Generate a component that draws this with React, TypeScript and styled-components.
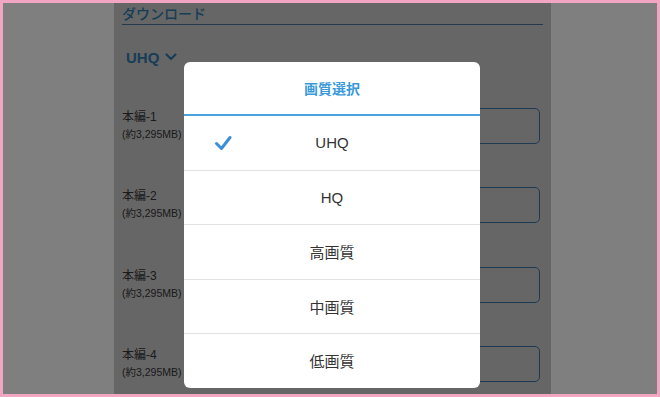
import React from "react";
import styled, { createGlobalStyle } from "styled-components";

const GlobalStyle = createGlobalStyle`
  html, body {
    margin: 0;
    padding: 0;
    background: #f3a6c1;
  }
  body {
    font-family: "Liberation Sans", "Noto Sans CJK JP", sans-serif;
  }
  * {
    box-sizing: border-box;
  }
`;

const qualities = ["UHQ", "HQ", "高画質", "中画質", "低画質"];
const episodes = ["本編-1", "本編-2", "本編-3", "本編-4"];

const CheckIcon = () => (
  <svg width="18" height="16" viewBox="0 0 18 16">
    <polyline
      points="2.5,8.5 7.5,13.5 16,2.5"
      fill="none"
      stroke="#3a8fd6"
      strokeWidth="3"
      strokeLinecap="round"
      strokeLinejoin="round"
    />
  </svg>
);

const ChevronIcon = () => (
  <svg width="12" height="8" viewBox="0 0 12 8">
    <polyline
      points="1.5,1.5 6,6 10.5,1.5"
      fill="none"
      stroke="#3a9ad9"
      strokeWidth="2.2"
      strokeLinecap="round"
      strokeLinejoin="round"
    />
  </svg>
);

const App = () => {
  return (
    <>
      <GlobalStyle />
      <SFrame>
        <SColumn>
          <SHeading>ダウンロード</SHeading>
          <SSelect>
            UHQ
            <ChevronIcon />
          </SSelect>
          <SList>
            {episodes.map((name) => (
              <SRow key={name}>
                <SLabel>
                  <SName>{name}</SName>
                  <SSize>(約3,295MB)</SSize>
                </SLabel>
                <SButton />
              </SRow>
            ))}
          </SList>
          <SOverlay />
          <SModal>
            <STitle>画質選択</STitle>
            {qualities.map((q, i) => (
              <SOption key={q} last={i === qualities.length - 1}>
                <SCheck>{i === 0 && <CheckIcon />}</SCheck>
                {q}
              </SOption>
            ))}
          </SModal>
        </SColumn>
      </SFrame>
    </>
  );
};

export default App;

const SFrame = styled.div`
  width: 660px;
  height: 397px;
  border: 3px solid #f3a6c1;
  background: #7f7f7f;
  padding-left: 111px;
  overflow: hidden;
`;

const SColumn = styled.div`
  position: relative;
  width: 437px;
  height: 100%;
  background: #ffffff;
  padding: 0 8px;
  overflow: hidden;
`;

const SHeading = styled.div`
  padding-top: 2px;
  font-size: 14px;
  line-height: 19px;
  font-weight: 500;
  color: #3a9ad9;
  border-bottom: 1.5px solid #5a90c0;
`;

const SSelect = styled.div`
  display: flex;
  align-items: center;
  gap: 6px;
  margin-top: 20px;
  padding-left: 4px;
  height: 24px;
  font-size: 15px;
  font-weight: bold;
  color: #3a9ad9;
`;

const SList = styled.div`
  margin-top: 17px;
`;

const SRow = styled.div`
  display: flex;
  align-items: center;
  justify-content: space-between;
  height: 79.5px;
  padding-right: 3px;
`;

const SLabel = styled.div`
  display: flex;
  flex-direction: column;
  color: #444;
`;

const SName = styled.span`
  font-size: 12px;
  line-height: 17px;
`;

const SSize = styled.span`
  font-size: 10.5px;
  line-height: 17px;
`;

const SButton = styled.div`
  width: 160px;
  height: 36px;
  border: 1.5px solid #4f8fcf;
  border-radius: 5px;
  background: #ffffff;
`;

const SOverlay = styled.div`
  position: absolute;
  inset: 0;
  background: rgba(0, 0, 0, 0.6);
`;

const SModal = styled.div`
  position: absolute;
  top: 59px;
  left: 70px;
  width: 296px;
  background: #ffffff;
  border-radius: 6px;
  overflow: hidden;
`;

const STitle = styled.div`
  height: 54px;
  display: flex;
  align-items: center;
  justify-content: center;
  font-size: 14px;
  font-weight: bold;
  color: #3a9ad9;
  border-bottom: 2px solid #4aa3df;
`;

const SOption = styled.div<{ last?: boolean }>`
  position: relative;
  height: ${({ last }) => (last ? "53.5px" : "54.5px")};
  display: flex;
  align-items: center;
  justify-content: center;
  font-size: 15px;
  color: #333;
  border-bottom: ${({ last }) => (last ? "none" : "1px solid #e3e3e3")};
`;

const SCheck = styled.span`
  position: absolute;
  left: 30px;
  top: 50%;
  transform: translateY(-50%);
  display: flex;
`;
